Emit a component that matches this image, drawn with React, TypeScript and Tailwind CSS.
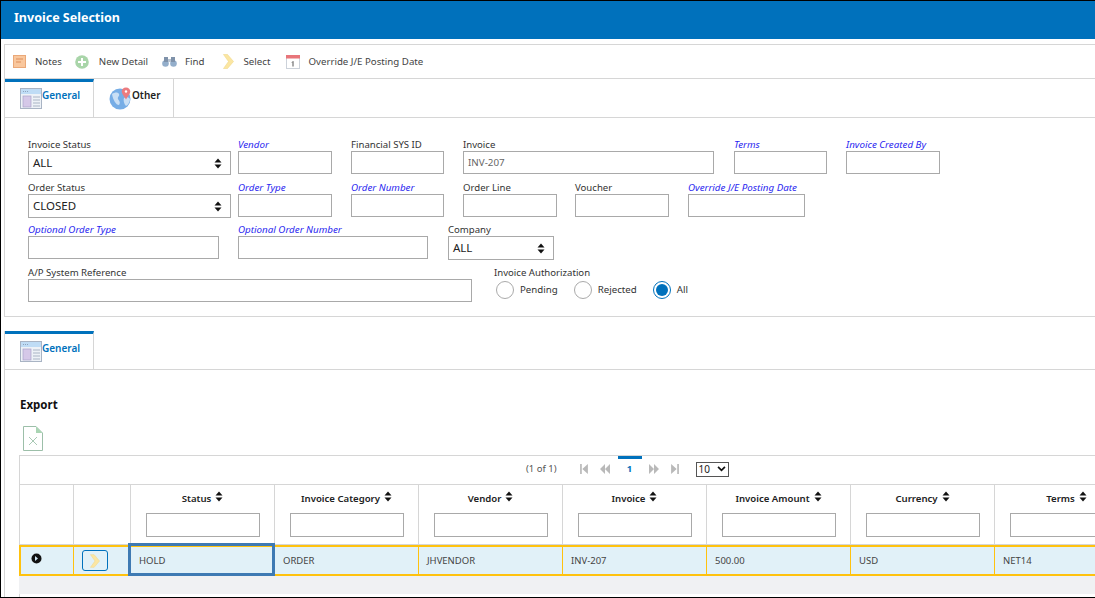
import React from "react";

const Sort = ({ className = "" }: { className?: string }) => (
  <svg viewBox="0 0 8 11" className={`w-[8px] h-[11px] shrink-0 ${className}`}>
    <path d="M4 0.5 L7.5 4.5 H0.5 Z M4 10.5 L7.5 6.5 H0.5 Z" fill="#111" />
  </svg>
);

const Field = ({ label, w, italic, value, mr }: { label: string; w: string; italic?: boolean; value?: string; mr?: string }) => (
  <div className={`flex flex-col shrink-0 ${w} ${mr ?? ""}`}>
    <span className={`h-[14px] leading-[16px] whitespace-nowrap ${italic ? "text-[9.8px] italic text-[#2a1ff0]" : "text-[9.6px] text-[#333]"}`}>{label}</span>
    <div className="h-[23px] border border-[#a9a9a9] bg-white pl-[4px] text-[9.8px] leading-[21px] text-[#666]">{value}</div>
  </div>
);

const Sel = ({ label, w, value, mr }: { label: string; w: string; value: string; mr?: string }) => (
  <div className={`flex flex-col shrink-0 ${w} ${mr ?? ""}`}>
    <span className="h-[14px] text-[9.6px] leading-[16px] whitespace-nowrap text-[#333]">{label}</span>
    <div className="h-[24px] border border-[#a9a9a9] bg-white pl-[4px] pr-[8px] flex items-center justify-between text-[11.5px] text-[#222]">
      <span>{value}</span>
      <Sort />
    </div>
  </div>
);

const Radio = ({ label, on, mr }: { label: string; on?: boolean; mr: string }) => (
  <div className={`flex items-center ${mr}`}>
    <span className={`w-[18px] h-[18px] rounded-full border flex items-center justify-center bg-white ${on ? "border-[#0071bc]" : "border-[#aaa]"}`}>
      {on && <span className="w-[12px] h-[12px] rounded-full bg-[#0071bc]" />}
    </span>
    <span className="ml-[6px] text-[9.7px] text-[#333]">{label}</span>
  </div>
);

const GeneralIcon = () => (
  <svg viewBox="0 0 22 21" className="w-[22px] h-[21px] shrink-0">
    <rect x="0.5" y="0.5" width="21" height="20" fill="#eef2f7" stroke="#a9b4c4" />
    <rect x="1" y="1" width="20" height="5" fill="#bfdcf5" />
    <path d="M3 3.5h5" stroke="#8ea4bd" strokeDasharray="1 1" />
    <rect x="3" y="8" width="8" height="11" fill="#d5c8e8" stroke="#a9a4c8" strokeWidth="0.7" />
    <path d="M13 9h7M13 12h7M13 15h7M13 18h7" stroke="#a9b4c4" />
  </svg>
);

const GlobeIcon = () => (
  <svg viewBox="0 0 23 23" className="w-[23px] h-[23px] shrink-0">
    <circle cx="11" cy="12" r="10.5" fill="#76ade6" />
    <path d="M3 7c3-2 6-2 7 0s-2 3-1 5 3 3 1 6c-3 0-6-5-7-11zM15 11c2-1 5-1 6 1 0 3-2 6-4 7-2-2-3-6-2-8z" fill="#c9dff5" />
    <path d="M17 0.5c-2.6 0-4.3 1.8-4.3 4 0 2.6 3 5.6 4.3 8 1.3-2.4 4.3-5.4 4.3-8 0-2.2-1.7-4-4.3-4z" fill="#ec7b7f" />
    <circle cx="17" cy="4.5" r="1.2" fill="#fff" />
  </svg>
);

const Chevron = ({ className = "" }: { className?: string }) => (
  <svg viewBox="0 0 11 15" className={className}>
    <path d="M0.5 0.5 H4.5 L10.5 7.5 L4.5 14.5 H0.5 L5.5 7.5 Z" fill="#fbe6a2" stroke="#f0d98c" strokeWidth="0.6" />
  </svg>
);

const Tool = ({ icon, label, gap, mr }: { icon: React.ReactNode; label: string; gap: string; mr: string }) => (
  <div className={`flex items-center ${mr}`}>
    {icon}
    <span className={`text-[9.7px] leading-[16px] pt-[1px] text-[#444] whitespace-nowrap ${gap}`}>{label}</span>
  </div>
);

const cols = ["Status", "Invoice Category", "Vendor", "Invoice", "Invoice Amount", "Currency", "Terms"];
const vals = ["HOLD", "ORDER", "JHVENDOR", "INV-207", "500.00", "USD", "NET14"];

const PagerIcon = ({ d }: { d: string }) => (
  <svg viewBox="0 0 9 9" className="w-[10px] h-[10px]"><path d={d} fill="#b9b9b9" /></svg>
);

export default function App() {
  return (
    <div className="w-[1095px] h-[598px] overflow-hidden bg-white border-l border-t border-b border-black font-['Noto_Sans',sans-serif] flex flex-col">
      <div className="h-[38px] shrink-0 bg-[#0071bc] pl-[13px] flex items-center pb-[4px]">
        <span className="text-[12.5px] font-bold text-white">Invoice Selection</span>
      </div>

      <div className="mt-[5px] ml-[3px] shrink-0 border-l border-t border-b border-[#d6d6d6] h-[273px] flex flex-col">
        <div className="h-[34px] shrink-0 flex items-center pl-[8px] border-b border-[#d6d6d6]">
          <Tool mr="mr-[13px]" gap="ml-[9px]" label="Notes" icon={
            <svg viewBox="0 0 13 13" className="w-[13px] h-[13px]"><rect x="0.5" y="0.5" width="12" height="12" fill="#f9c79d" stroke="#eaa878" /><path d="M3 4h7M3 7h5" stroke="#dd8f5c" /></svg>
          } />
          <Tool mr="mr-[14px]" gap="ml-[10px]" label="New Detail" icon={
            <svg viewBox="0 0 14 14" className="w-[14px] h-[14px]"><circle cx="7" cy="7" r="6.8" fill="#a9d5a9" /><path d="M7 3v8M3 7h8" stroke="#fff" strokeWidth="2" /></svg>
          } />
          <Tool mr="mr-[18px]" gap="ml-[8px]" label="Find" icon={
            <svg viewBox="0 0 15 11" className="w-[15px] h-[11px]"><circle cx="3.5" cy="7.5" r="3.3" fill="#93aecb" /><circle cx="11.5" cy="7.5" r="3.3" fill="#93aecb" /><rect x="2" y="1" width="4" height="5" fill="#7f92aa" /><rect x="9" y="1" width="4" height="5" fill="#7f92aa" /><rect x="6" y="3" width="3" height="3" fill="#b7c3d1" /></svg>
          } />
          <Tool mr="mr-[16px]" gap="ml-[10px]" label="Select" icon={<Chevron className="w-[11px] h-[15px]" />} />
          <Tool mr="" gap="ml-[8px]" label="Override J/E Posting Date" icon={
            <svg viewBox="0 0 14 14" className="w-[14px] h-[14px]"><rect x="0.5" y="0.5" width="13" height="13" fill="#fff" stroke="#ccd2da" /><rect x="0" y="0" width="14" height="3.5" fill="#e8757a" /><path d="M7 6.5v5M6 7.5l1-1" stroke="#555" /></svg>
          } />
        </div>

        <div className="h-[39px] shrink-0 flex border-b border-[#d6d6d6]">
          <div className="w-[89px] border-t-[3px] border-t-[#0071bc] border-r border-r-[#d6d6d6] flex pl-[15px] pt-[6px]">
            <GeneralIcon />
            <span className="text-[10px] font-semibold text-[#0071bc] leading-[14px]">General</span>
          </div>
          <div className="w-[80px] border-r border-r-[#d6d6d6] flex pl-[15px] pt-[8px]">
            <GlobeIcon />
            <span className="text-[10px] font-semibold text-[#222] leading-[14px] mt-[1px]">Other</span>
          </div>
        </div>

        <div className="flex flex-col pl-[23px] pt-[19px]">
          <div className="flex h-[43px]">
            <Sel label="Invoice Status" w="w-[203px]" value="ALL" mr="mr-[7px]" />
            <Field label="Vendor" italic w="w-[94px]" mr="mr-[19px]" />
            <Field label="Financial SYS ID" w="w-[93px]" mr="mr-[19px]" />
            <Field label="Invoice" w="w-[251px]" value="INV-207" mr="mr-[20px]" />
            <Field label="Terms" italic w="w-[93px]" mr="mr-[19px]" />
            <Field label="Invoice Created By" italic w="w-[94px]" />
          </div>
          <div className="flex h-[42px]">
            <Sel label="Order Status" w="w-[203px]" value="CLOSED" mr="mr-[7px]" />
            <Field label="Order Type" italic w="w-[94px]" mr="mr-[19px]" />
            <Field label="Order Number" italic w="w-[93px]" mr="mr-[19px]" />
            <Field label="Order Line" w="w-[94px]" mr="mr-[18px]" />
            <Field label="Voucher" w="w-[94px]" mr="mr-[19px]" />
            <Field label="Override J/E Posting Date" italic w="w-[117px]" />
          </div>
          <div className="flex h-[43px]">
            <Field label="Optional Order Type" italic w="w-[191px]" mr="mr-[19px]" />
            <Field label="Optional Order Number" italic w="w-[190px]" mr="mr-[20px]" />
            <Sel label="Company" w="w-[106px]" value="ALL" />
          </div>
          <div className="flex">
            <Field label="A/P System Reference" w="w-[444px]" mr="mr-[22px]" />
            <div className="flex flex-col">
              <span className="h-[16px] text-[9.6px] leading-[16px] text-[#333]">Invoice Authorization</span>
              <div className="flex pl-[2px]">
                <Radio label="Pending" mr="mr-[16px]" />
                <Radio label="Rejected" mr="mr-[16px]" />
                <Radio label="All" on mr="" />
              </div>
            </div>
          </div>
        </div>
      </div>

      <div className="mt-[14px] ml-[3px] flex-1 border-l border-[#d6d6d6] flex flex-col min-h-0">
        <div className="h-[39px] shrink-0 flex border-b border-[#d6d6d6]">
          <div className="w-[89px] border-t-[3px] border-t-[#0071bc] border-r border-r-[#d6d6d6] flex pl-[15px] pt-[7px]">
            <GeneralIcon />
            <span className="text-[10px] font-semibold text-[#0071bc] leading-[14px]">General</span>
          </div>
        </div>
        <div className="pl-[14px] flex flex-col flex-1 min-h-0">
          <div className="mt-[27px] ml-[1px] h-[16px] text-[11.5px] leading-[16px] font-bold text-[#111]">Export</div>
          <svg viewBox="0 0 20 25" className="w-[20px] h-[25px] mt-[13px] ml-[4px] shrink-0">
            <path d="M0.5 0.5H13L19.5 7V24.5H0.5Z" fill="#fff" stroke="#9cbfa9" />
            <path d="M13 0.5L19.5 7H13Z" fill="#a9d5b3" />
            <path d="M6 11l8 8M14 11l-8 8" stroke="#a9c9b5" />
          </svg>
          <div className="mt-[4px] border-t border-l border-[#d6d6d6] flex-1 flex flex-col min-h-0 w-[1200px]">
            <div className="h-[29px] shrink-0 border-b border-[#d6d6d6] w-[1076px] flex items-center pb-[2px] text-[9.5px] text-[#555] pl-[506px]">
              <span className="whitespace-nowrap">(1 of 1)</span>
              <div className="flex items-center ml-[22px] gap-[11px]">
                <PagerIcon d="M1 0h1.5v9H1zM8 0v9L3 4.5z" />
                <PagerIcon d="M4.5 0v9L0 4.5zM9 0v9L4.5 4.5z" />
              </div>
              <span className="relative ml-[8px] w-[24px] h-[26px] flex items-center justify-center text-[#0071bc] font-bold">
                <span className="absolute top-0 left-0 right-0 h-[3px] bg-[#0071bc]" />1
              </span>
              <div className="flex items-center ml-[7px] gap-[11px]">
                <PagerIcon d="M0 0v9l4.5-4.5zM4.5 0v9L9 4.5z" />
                <PagerIcon d="M1 0v9l5-4.5zM6.5 0H8v9H6.5z" />
              </div>
              <div className="ml-[16px] w-[33px] h-[15px] border border-[#555] flex items-center justify-between pl-[2px] pr-[2px] text-[10px] text-[#222]">
                10
                <svg viewBox="0 0 10 7" className="w-[9px] h-[6px]"><path d="M1 1l4 4 4-4" fill="none" stroke="#111" strokeWidth="2" /></svg>
              </div>
            </div>
            <div className="h-[60px] shrink-0 flex border-b border-[#d6d6d6]">
              <div className="w-[54px] shrink-0 border-r border-[#d6d6d6]" />
              <div className="w-[57px] shrink-0 border-r border-[#d6d6d6]" />
              {cols.map((c) => (
                <div key={c} className="w-[144px] shrink-0 border-r border-[#d6d6d6] flex flex-col items-center pt-[6px]">
                  <div className="h-[20px] flex items-start justify-center">
                    <span className="text-[9.6px] leading-[14px] mt-[1px] font-semibold text-[#222] whitespace-nowrap">{c}</span>
                    <Sort className="ml-[4px]" />
                  </div>
                  <div className="w-[114px] h-[24px] mt-[2px] border border-[#a9a9a9] bg-white" />
                </div>
              ))}
            </div>
            <div className="h-[31px] shrink-0 flex bg-[#e1f1f8] border-y-2 border-[#ffc20e] -ml-[1px] w-[1077px]">
              <div className="w-[55px] shrink-0 border-l-2 border-l-[#ffc20e] border-r border-r-[#ffc20e] flex justify-center pt-[6px] pr-[22px]">
                <svg viewBox="0 0 11 11" className="w-[11px] h-[11px]">
                  <circle cx="5.5" cy="5.5" r="5" fill="#111" />
                  <path d="M4 3l3 2.5L4 8z" fill="#cfe6f3" />
                </svg>
              </div>
              <div className="w-[57px] shrink-0 border-r border-r-[#ffc20e] flex items-center pl-[8px]">
                <div className="w-[26px] h-[21px] rounded-[3px] border border-[#0071bc] flex items-center justify-center">
                  <Chevron className="w-[10px] h-[14px]" />
                </div>
              </div>
              {vals.map((v, i) => (
                <div key={v} className={`relative w-[144px] shrink-0 flex items-center text-[9.5px] leading-[16px] pt-[1px] text-[#444] pl-[8px] ${i === vals.length - 1 ? "" : "border-r border-r-[#ffc20e]"}`}>
                  {i === 0 && <div className="absolute -left-[3px] -top-[4px] w-[147px] h-[33px] border-[3px] border-[#3e7ab3]" />}
                  {v}
                </div>
              ))}
            </div>
            <div className="h-[18px] shrink-0 bg-[#f0f1f3] -ml-[1px] w-[1077px]" />
          </div>
        </div>
      </div>
    </div>
  );
}
